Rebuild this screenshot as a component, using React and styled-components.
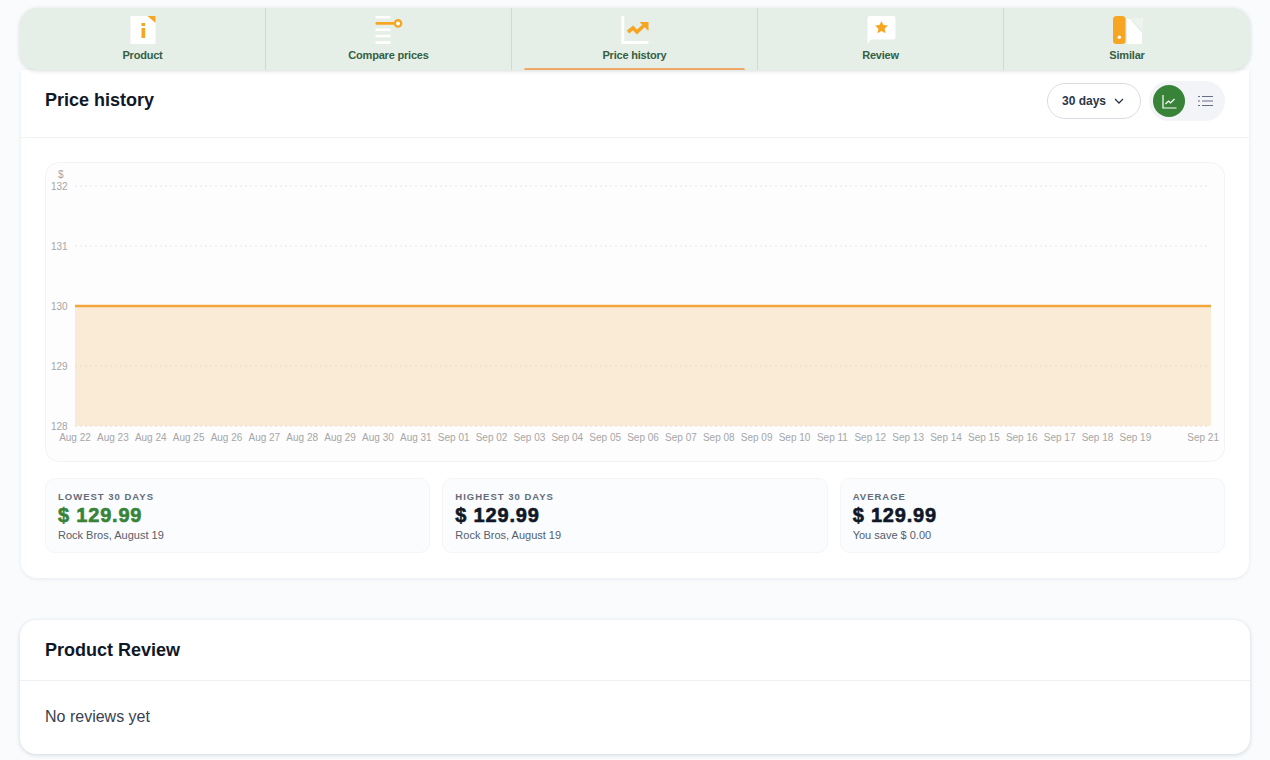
import React from 'react';
import styled, { createGlobalStyle } from 'styled-components';

const Global = createGlobalStyle`
  html, body {
    margin: 0;
    padding: 0;
    background: #f9fbfd;
    font-family: "Liberation Sans", Arial, sans-serif;
  }
`;

const Page = styled.div`
  padding: 8px 20px 6px;
  box-sizing: border-box;
  width: 1270px;
  height: 760px;
  overflow: hidden;
`;

const Nav = styled.nav`
  position: relative;
  z-index: 1;
  display: grid;
  grid-template-columns: repeat(5, 1fr);
  height: 62px;
  background: #e5eee7;
  border-radius: 18px;
  box-shadow: 0 1px 4px rgba(40, 60, 50, 0.18);
  overflow: hidden;
`;

const Tab = styled.div`
  position: relative;
  display: flex;
  flex-direction: column;
  align-items: center;
  padding-top: 8px;
  box-sizing: border-box;
  border-right: ${p => (p.$last ? 'none' : '1px solid #cfdcd3')};
  color: #355f43;
  font-size: 11px;
  font-weight: 700;
  letter-spacing: -0.2px;

  &::after {
    content: '';
    display: ${p => (p.$active ? 'block' : 'none')};
    position: absolute;
    left: 12px;
    right: 12px;
    bottom: 0;
    height: 2px;
    border-radius: 2px 2px 0 0;
    background: #eda868;
  }
`;

const TabIcon = styled.svg`
  display: block;
  width: 40px;
  height: 28px;
  margin-bottom: 5px;
`;

const Card = styled.section`
  margin: 0 1px;
  background: #fff;
  border-radius: 0 0 16px 16px;
  box-shadow: 0 1px 4px rgba(30, 50, 70, 0.08);
`;

const Header = styled.header`
  display: flex;
  align-items: center;
  justify-content: space-between;
  height: 68px;
  padding: 0 24px 7px;
  box-sizing: border-box;
  border-bottom: 1px solid #f1f3f6;
`;

const Title = styled.h2`
  margin: 0;
  font-size: 18px;
  font-weight: 700;
  color: #101828;
`;

const Controls = styled.div`
  display: flex;
  align-items: center;
  gap: 8px;
  margin-top: 2px;
`;

const Select = styled.div`
  display: flex;
  align-items: center;
  gap: 8px;
  width: 94px;
  height: 36px;
  padding-left: 14px;
  box-sizing: border-box;
  border: 1px solid #d8dce2;
  border-radius: 18px;
  background: #fff;
  color: #2b3648;
  font-size: 12px;
  font-weight: 700;
`;

const Toggle = styled.div`
  display: flex;
  align-items: center;
  gap: 4px;
  width: 76px;
  height: 40px;
  padding: 0 4px;
  box-sizing: border-box;
  border-radius: 20px;
  background: #f2f4f7;
`;

const ToggleButton = styled.div`
  display: flex;
  flex: none;
  align-items: center;
  justify-content: center;
  width: 32px;
  height: 32px;
  border-radius: 50%;
  background: ${p => (p.$active ? '#388338' : 'transparent')};
  color: ${p => (p.$active ? '#fff' : '#667085')};
`;

const Body = styled.div`
  padding: 24px 24px 25px;
`;

const ChartBox = styled.div`
  height: 300px;
  box-sizing: border-box;
  background: #fdfdfe;
  border: 1px solid #f1f3f5;
  border-radius: 14px;
  overflow: hidden;
`;

const ChartSvg = styled.svg`
  display: block;
  width: 1178px;
  height: 298px;

  text {
    font-family: "Liberation Sans", Arial, sans-serif;
    font-size: 10px;
    fill: #a6a6a6;
  }
`;

const Stats = styled.div`
  display: grid;
  grid-template-columns: repeat(3, 1fr);
  gap: 12px;
  margin-top: 16px;
`;

const Stat = styled.div`
  height: 75px;
  padding: 12px 12px 0;
  box-sizing: border-box;
  background: #fafcfe;
  border: 1px solid #f3f5f7;
  border-radius: 10px;
`;

const StatLabel = styled.div`
  font-size: 9.5px;
  line-height: 11px;
  font-weight: 700;
  letter-spacing: 1px;
  color: #636c79;
`;

const StatValue = styled.div`
  margin-top: 2px;
  font-size: 20px;
  line-height: 23px;
  font-weight: 700;
  letter-spacing: 0.8px;
  -webkit-text-stroke: 0.6px currentColor;
  color: ${p => (p.$good ? '#388338' : '#101828')};
`;

const StatNote = styled.div`
  margin-top: 2px;
  font-size: 11px;
  line-height: 13px;
  color: #555e6b;
`;

const ReviewCard = styled.section`
  margin-top: 42px;
  height: 134px;
  background: #fff;
  border-radius: 16px;
  box-shadow: 0 1px 4px rgba(30, 50, 70, 0.18);
`;

const ReviewHeader = styled.header`
  display: flex;
  align-items: center;
  height: 61px;
  padding: 0 25px;
  box-sizing: border-box;
  border-bottom: 1px solid #eef0f3;
`;

const ReviewBody = styled.div`
  padding: 26px 25px 0;
  font-size: 16px;
  line-height: 19px;
  color: #374151;
`;

const ORANGE = '#f6a623';

const ProductIcon = () => (
  <TabIcon viewBox="0 0 40 28">
    <rect x="7.5" y="0" width="25" height="28" fill="#fff" />
    <polygon points="24.5,0 32.5,0 32.5,7" fill={ORANGE} />
    <rect x="18.5" y="7" width="3.6" height="3" fill={ORANGE} />
    <rect x="18.5" y="12" width="3.6" height="10" fill={ORANGE} />
  </TabIcon>
);

const CompareIcon = () => (
  <TabIcon viewBox="0 0 40 28">
    <g fill="#fff">
      <rect x="6.5" y="0" width="15" height="2.5" />
      <rect x="6.5" y="12.5" width="15" height="2.5" />
      <rect x="6.5" y="18.8" width="15" height="2.5" />
      <rect x="6.5" y="25.2" width="15" height="2.8" />
    </g>
    <rect x="6.5" y="6" width="19" height="2.8" rx="1.4" fill={ORANGE} />
    <circle cx="29" cy="7.4" r="3.2" fill="#fff" stroke={ORANGE} strokeWidth="2.4" />
  </TabIcon>
);

const HistoryIcon = () => (
  <TabIcon viewBox="0 0 40 28">
    <path d="M7.8 0V26.5H33.5" fill="none" stroke="#fff" strokeWidth="3" />
    <path d="M13 16L18 12L22 16L29 9.5" fill="none" stroke={ORANGE} strokeWidth="3.6" />
    <polygon points="24.5,6 33.5,6 33.5,15" fill={ORANGE} />
  </TabIcon>
);

const ReviewIcon = () => (
  <TabIcon viewBox="0 0 40 28">
    <path d="M6.5 2a2 2 0 0 1 2-2H32.5a2 2 0 0 1 2 2V21.5a2 2 0 0 1-2 2H10L6.5 28Z" fill="#fff" />
    <polygon
      points="20.5,5 22.4,9.1 26.9,9.6 23.6,12.7 24.5,17.2 20.5,15 16.5,17.2 17.4,12.7 14.1,9.6 18.6,9.1"
      fill={ORANGE}
    />
  </TabIcon>
);

const SimilarIcon = () => (
  <TabIcon viewBox="0 0 40 28">
    <polygon points="24,2 36,2 36,16" fill="#edf3ee" />
    <polygon points="20,3 23,3 35,17 35,28 20,28" fill="#fff" />
    <rect x="6" y="0" width="12.5" height="28" rx="3.5" fill={ORANGE} />
    <circle cx="12.3" cy="21.3" r="1.7" fill="#fff" />
  </TabIcon>
);

const tabs = [
  { label: 'Product', Icon: ProductIcon },
  { label: 'Compare prices', Icon: CompareIcon },
  { label: 'Price history', Icon: HistoryIcon, active: true },
  { label: 'Review', Icon: ReviewIcon },
  { label: 'Similar', Icon: SimilarIcon },
];

const dates = [
  'Aug 22', 'Aug 23', 'Aug 24', 'Aug 25', 'Aug 26', 'Aug 27', 'Aug 28', 'Aug 29', 'Aug 30', 'Aug 31',
  'Sep 01', 'Sep 02', 'Sep 03', 'Sep 04', 'Sep 05', 'Sep 06', 'Sep 07', 'Sep 08', 'Sep 09', 'Sep 10',
  'Sep 11', 'Sep 12', 'Sep 13', 'Sep 14', 'Sep 15', 'Sep 16', 'Sep 17', 'Sep 18', 'Sep 19',
];

const ticks = [
  { label: '132', y: 23 },
  { label: '131', y: 83 },
  { label: '130', y: 143 },
  { label: '129', y: 203 },
  { label: '128', y: 263 },
];

const PriceChart = () => (
  <ChartSvg viewBox="0 0 1178 298">
    <text x="12" y="15">$</text>
    <rect x="29" y="143" width="1136" height="120" fill="#f9ebd5" />
    {ticks.map(t => (
      <g key={t.label}>
        <line
          x1="29"
          x2="1163"
          y1={t.y}
          y2={t.y}
          stroke={t.y > 143 ? '#e6dccb' : '#e4e6e9'}
          strokeWidth="1"
          strokeDasharray="2 3"
        />
        <text x="5" y={t.y + 3.5}>{t.label}</text>
      </g>
    ))}
    <line x1="29" x2="1165" y1="143" y2="143" stroke="#f2a63c" strokeWidth="2.5" />
    {dates.map((d, i) => (
      <text key={d} x={29 + i * 37.87} y="278" textAnchor="middle">{d}</text>
    ))}
    <text x="1173" y="278" textAnchor="end">Sep 21</text>
  </ChartSvg>
);

export default function App() {
  return (
    <Page>
      <Global />
      <Nav>
        {tabs.map(({ label, Icon, active }, i) => (
          <Tab key={label} $last={i === tabs.length - 1} $active={active}>
            <Icon />
            {label}
          </Tab>
        ))}
      </Nav>

      <Card>
        <Header>
          <Title>Price history</Title>
          <Controls>
            <Select>
              30 days
              <svg width="10" height="6" viewBox="0 0 10 6">
                <path d="M1 1l4 4 4-4" fill="none" stroke="#2b3648" strokeWidth="1.3" />
              </svg>
            </Select>
            <Toggle>
              <ToggleButton $active>
                <svg width="15" height="15" viewBox="0 0 15 15" fill="none" stroke="currentColor" strokeWidth="1.2">
                  <path d="M1 1V14H14.5" />
                  <path d="M3.5 10L6.5 7L8.5 9L12.5 5" />
                </svg>
              </ToggleButton>
              <ToggleButton>
                <svg width="15" height="12" viewBox="0 0 15 12" fill="none" stroke="currentColor" strokeWidth="1.1">
                  <path d="M0 1.5H2M4 1.5H15M0 6H2M4 6H15M0 10.5H2M4 10.5H15" />
                </svg>
              </ToggleButton>
            </Toggle>
          </Controls>
        </Header>

        <Body>
          <ChartBox>
            <PriceChart />
          </ChartBox>
          <Stats>
            <Stat>
              <StatLabel>LOWEST 30 DAYS</StatLabel>
              <StatValue $good>$ 129.99</StatValue>
              <StatNote>Rock Bros, August 19</StatNote>
            </Stat>
            <Stat>
              <StatLabel>HIGHEST 30 DAYS</StatLabel>
              <StatValue>$ 129.99</StatValue>
              <StatNote>Rock Bros, August 19</StatNote>
            </Stat>
            <Stat>
              <StatLabel>AVERAGE</StatLabel>
              <StatValue>$ 129.99</StatValue>
              <StatNote>You save $ 0.00</StatNote>
            </Stat>
          </Stats>
        </Body>
      </Card>

      <ReviewCard>
        <ReviewHeader>
          <Title>Product Review</Title>
        </ReviewHeader>
        <ReviewBody>No reviews yet</ReviewBody>
      </ReviewCard>
    </Page>
  );
}
